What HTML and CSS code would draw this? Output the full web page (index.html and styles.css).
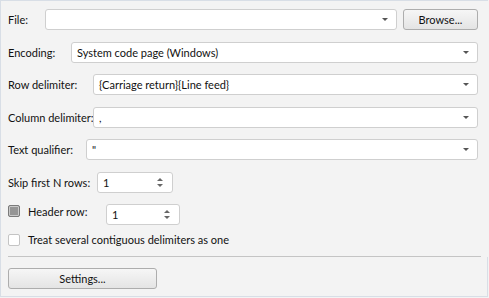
FILE: index.html
```html
<!DOCTYPE html>
<html lang="en">

<head>
  <meta charset="UTF-8">
  <meta name="viewport" content="width=device-width, initial-scale=1.0">
  <title>Import Text File</title>
  <link rel="stylesheet" href="styles.css">
</head>

<body>
  <div class="panel">
    <div class="form">
      <div class="row">
        <label class="label label-file">File:</label>
        <div class="combo combo-grow"><span class="value"></span><span class="arrow"></span></div>
        <button class="btn btn-browse">Browse...</button>
      </div>
      <div class="row">
        <label class="label label-encoding">Encoding:</label>
        <div class="combo"><span class="value">System code page (Windows)</span><span class="arrow"></span></div>
      </div>
      <div class="row">
        <label class="label label-delim">Row delimiter:</label>
        <div class="combo"><span class="value">{Carriage return}{Line feed}</span><span class="arrow"></span></div>
      </div>
      <div class="row">
        <label class="label label-delim">Column delimiter:</label>
        <div class="combo"><span class="value">,</span><span class="arrow"></span></div>
      </div>
      <div class="row">
        <label class="label label-qualifier">Text qualifier:</label>
        <div class="combo"><span class="value">"</span><span class="arrow"></span></div>
      </div>
      <div class="row">
        <label class="label label-skip">Skip first N rows:</label>
        <div class="spin"><span class="value">1</span><span class="spin-arrows"><span class="up"></span><span class="down"></span></span></div>
      </div>
      <div class="row row-header">
        <span class="check check-mixed"></span>
        <label class="label label-header">Header row:</label>
        <div class="spin spin-header"><span class="value">1</span><span class="spin-arrows"><span class="up"></span><span class="down"></span></span></div>
      </div>
      <div class="row row-check">
        <span class="check"></span>
        <label class="label">Treat several contiguous delimiters as one</label>
      </div>
    </div>
    <hr class="sep">
    <div class="footer">
      <button class="btn btn-settings">Settings...</button>
    </div>
  </div>
</body>

</html>
```

FILE: styles.css
```css
body {
  margin: 0;
  background-color: #f3f3f3;
  font-family: Lato, "Noto Sans", sans-serif;
  font-size: 11px;
  color: #111;
}

.panel {
  width: 488px;
  height: 297px;
  border: 1px solid #d8dee6;
  border-right: none;
  box-sizing: border-box;
  display: flex;
  flex-direction: column;
}

.form {
  display: flex;
  flex-direction: column;
  gap: 11.5px;
  padding: 8px 10px 0 7px;
}

.row {
  display: flex;
  align-items: center;
  height: 21px;
}

.row-header .check,
.row-header .label {
  margin-bottom: 7px;
}

.row-check {
  height: 12px;
  margin-top: -3px;
}

.label {
  flex-shrink: 0;
  white-space: nowrap;
}

.label-file {
  width: 37px;
}

.label-encoding {
  width: 63px;
}

.label-delim {
  width: 85px;
}

.label-qualifier {
  width: 78px;
}

.label-skip {
  width: 89px;
}

.label-header {
  width: 78px;
}

.combo,
.spin {
  flex: 1;
  height: 21px;
  box-sizing: border-box;
  border: 1px solid #cfcfcf;
  border-radius: 3px;
  background-color: #fff;
  display: flex;
  align-items: center;
  padding: 0 8px 0 5px;
}

.combo-grow {
  margin-right: 6px;
}

.value {
  flex: 1;
  white-space: nowrap;
}

.arrow {
  width: 0;
  height: 0;
  border-left: 3px solid transparent;
  border-right: 3px solid transparent;
  border-top: 3px solid #555;
}

.spin {
  flex: none;
  width: 76px;
  padding-right: 9px;
}

.spin-header {
  width: 74px;
}

.spin-arrows {
  display: flex;
  flex-direction: column;
  gap: 3px;
}

.up,
.down {
  width: 0;
  height: 0;
  border-left: 3px solid transparent;
  border-right: 3px solid transparent;
}

.up {
  border-bottom: 3px solid #666;
}

.down {
  border-top: 3px solid #666;
}

.check {
  width: 12px;
  height: 12px;
  box-sizing: border-box;
  margin-right: 8px;
  border: 1px solid #c4c4c4;
  border-radius: 2px;
  background-color: #fff;
  flex-shrink: 0;
}

.check-mixed {
  border-color: #7a7a7a;
  background-color: #959595;
  box-shadow: inset 0 0 0 1px #c9c9c9;
}

.btn {
  height: 21px;
  box-sizing: border-box;
  border: 1px solid #adadad;
  border-radius: 3px;
  background: linear-gradient(#f6f6f6, #e4e4e4);
  font-family: inherit;
  font-size: 11px;
  color: #111;
  padding: 0;
}

.btn-browse {
  width: 75px;
}

.btn-settings {
  width: 149px;
}

.sep {
  margin: 10px 7px 0 7px;
  border: none;
  border-top: 1px solid #c4c4c4;
  height: 0;
}

.footer {
  flex: 1;
  padding: 11px 0 0 7px;
  border-right: 1px solid #d8dee6;
}
```
